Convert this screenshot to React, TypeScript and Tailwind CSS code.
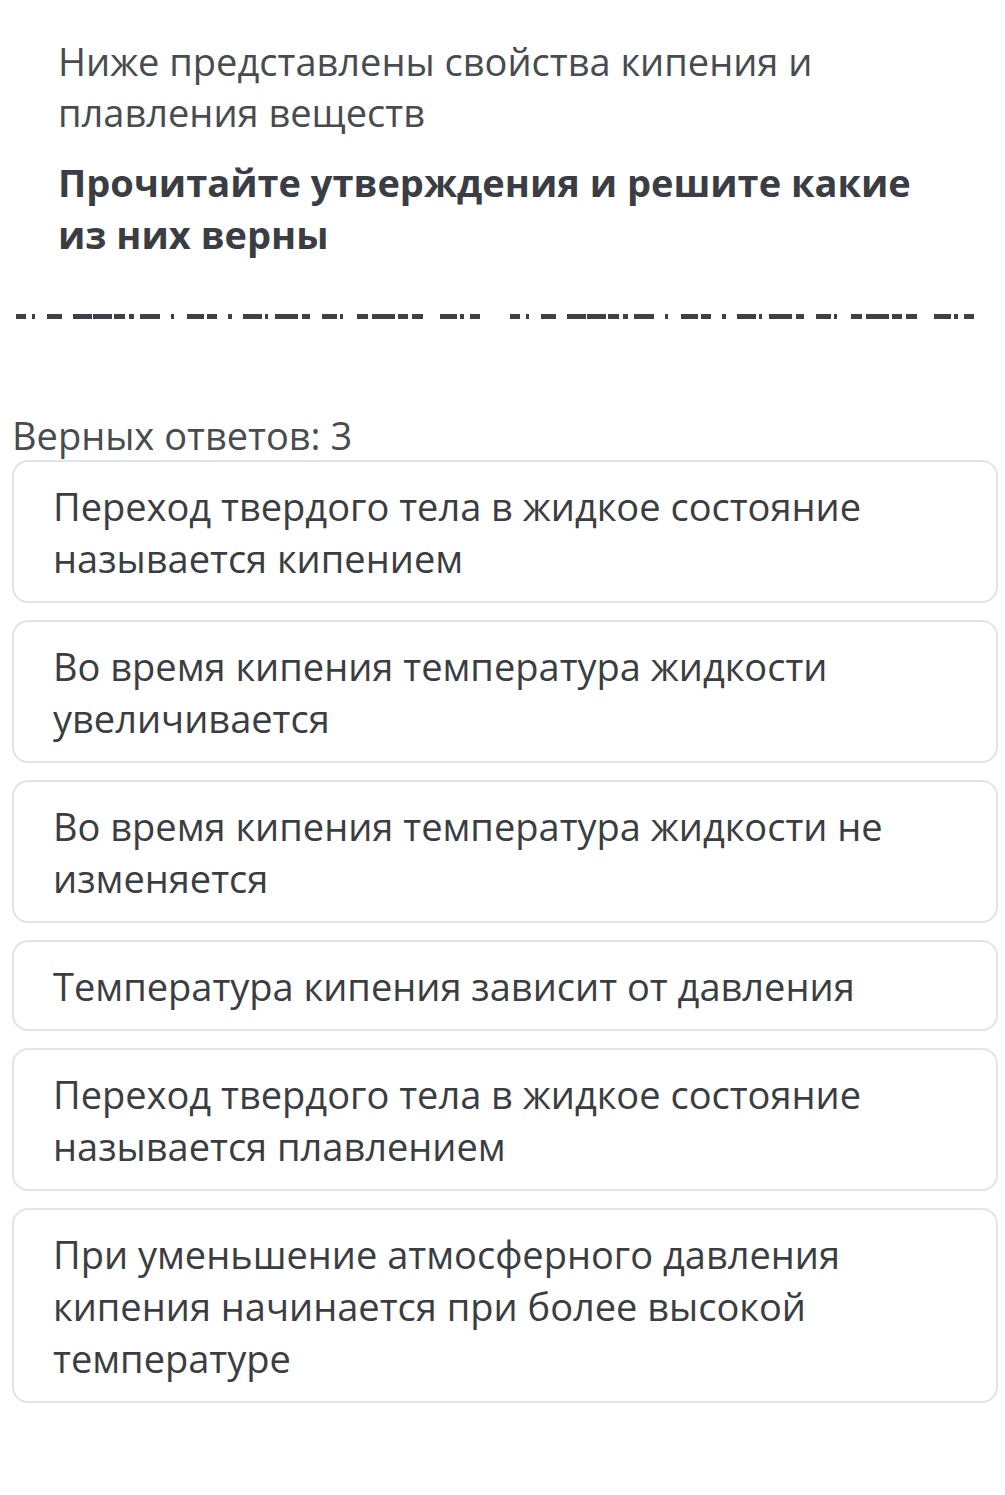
import React from 'react';

const dashes: [number, number][] = [
  [16, 26], [32, 35], [47, 62], [73, 92], [93, 112], [114, 125], [129, 134], [140, 160],
  [171, 174], [187, 204], [207, 217], [228, 232], [243, 262], [265, 268], [275, 298],
  [302, 310], [322, 337], [340, 343], [357, 368], [372, 395], [398, 408], [412, 423],
  [440, 457], [460, 464], [470, 480],
];

const answers = [
  'Переход твердого тела в жидкое состояние называется кипением',
  'Во время кипения температура жидкости увеличивается',
  'Во время кипения температура жидкости не изменяется',
  'Температура кипения зависит от давления',
  'Переход твердого тела в жидкое состояние называется плавлением',
  'При уменьшение атмосферного давления кипения начинается при более высокой температуре',
];

function DashRow() {
  return (
    <svg width="1005" height="10" viewBox="0 0 1005 10" className="block">
      {[0, 494].map((off) =>
        dashes.map(([a, b]) => (
          <rect key={`${off}-${a}`} x={a + off} y={2} width={b - a} height={5} fill="#3d4046" />
        ))
      )}
    </svg>
  );
}

export default function App() {
  return (
    <div className="w-[1005px] min-h-[1495px] bg-white text-[#3a3d42] font-['Open_Sans',sans-serif]">
      {/* Question header */}
      <div className="pl-[58px] pr-[60px] pt-[36px]">
        <p className="text-[38px] leading-[51px] text-[#484b50]">
          Ниже представлены свойства кипения и плавления веществ
        </p>
        <p className="mt-[18px] text-[38px] leading-[52px] font-bold text-[#3a3d43]">
          Прочитайте утверждения и решите какие из них верны
        </p>
      </div>

      <div className="mt-[52px]">
        <DashRow />
      </div>

      {/* Answers */}
      <div className="mt-[88px] pl-[12px] pr-[7px]">
        <p className="text-[38px] leading-[50px] text-[#484b50]">Верных ответов: 3</p>
        <div className="flex flex-col gap-[17px]">
          {answers.map((text) => (
            <div
              key={text}
              className="rounded-[16px] border-2 border-[#e2e3e5] pl-[39px] pr-[40px] pt-[18px] pb-[17px] text-[38px] leading-[52px]"
            >
              {text}
            </div>
          ))}
        </div>
      </div>
    </div>
  );
}
